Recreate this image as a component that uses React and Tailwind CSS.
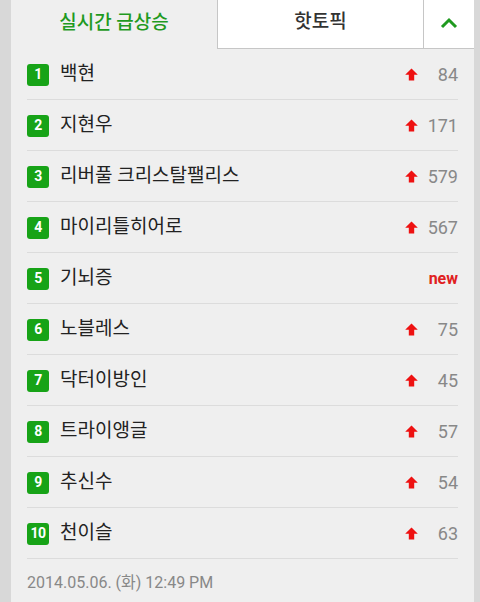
import React from "react";

const rows = [
  { n: 1, name: "백현", v: "84" },
  { n: 2, name: "지현우", v: "171" },
  { n: 3, name: "리버풀 크리스탈팰리스", v: "579" },
  { n: 4, name: "마이리틀히어로", v: "567" },
  { n: 5, name: "기뇌증", v: "new" },
  { n: 6, name: "노블레스", v: "75" },
  { n: 7, name: "닥터이방인", v: "45" },
  { n: 8, name: "트라이앵글", v: "57" },
  { n: 9, name: "추신수", v: "54" },
  { n: 10, name: "천이슬", v: "63" },
];

function Arrow() {
  return (
    <svg width="13" height="13" viewBox="0 0 13 13" className="block">
      <path d="M6.5 0.5 L12.8 6.8 L9.2 6.8 L9.2 12.5 L3.8 12.5 L3.8 6.8 L0.2 6.8 Z" fill="#ee1111" />
    </svg>
  );
}

export default function App() {
  return (
    <div
      className="w-[480px] h-[602px] bg-[#d8d8d8] flex overflow-hidden"
      style={{ fontFamily: '"Roboto", "Noto Sans CJK KR", sans-serif' }}
    >
      <div className="w-[11px] shrink-0" />
      <div className="w-[463px] bg-[#efefef] flex flex-col">
        <div className="flex h-[49px]">
          <div className="w-[206px] flex items-center justify-center text-[#1f9a1f] text-[19px] font-medium pb-[3px]">
            실시간 급상승
          </div>
          <div className="w-[206px] bg-white border-l border-b border-[#c6c6c6] flex items-center justify-center text-[#333] text-[19px] font-medium pb-[3px]">
            핫토픽
          </div>
          <div className="flex-1 bg-white border-l border-b border-[#c6c6c6] flex items-center justify-center pb-[2px]">
            <svg width="20" height="12" viewBox="0 0 20 12">
              <path d="M3 10 L10 3 L17 10" fill="none" stroke="#1f9a1f" strokeWidth="3" />
            </svg>
          </div>
        </div>
        <div className="px-4">
          {rows.map((r) => (
            <div key={r.n} className="h-[51px] flex items-center border-b border-[#dcdcdc] pt-[1px]">
              <div className="w-[22px] h-[22px] rounded-[3px] bg-[#17a317] text-white flex items-center justify-center text-[14px] font-bold tracking-[-0.5px]">
                {r.n}
              </div>
              <div className="ml-[11px] text-[19px] text-[#222] flex-1">{r.name}</div>
              {r.v === "new" ? (
                <div className="text-[#e02020] text-[16px] font-bold">new</div>
              ) : (
                <div className="flex items-center">
                  <Arrow />
                  <div className="w-[40px] text-right text-[18px] text-[#888]">{r.v}</div>
                </div>
              )}
            </div>
          ))}
          <div className="pt-[12px] text-[16px] text-[#888]">2014.05.06. (화) 12:49 PM</div>
        </div>
      </div>
      <div className="flex-1" />
    </div>
  );
}
